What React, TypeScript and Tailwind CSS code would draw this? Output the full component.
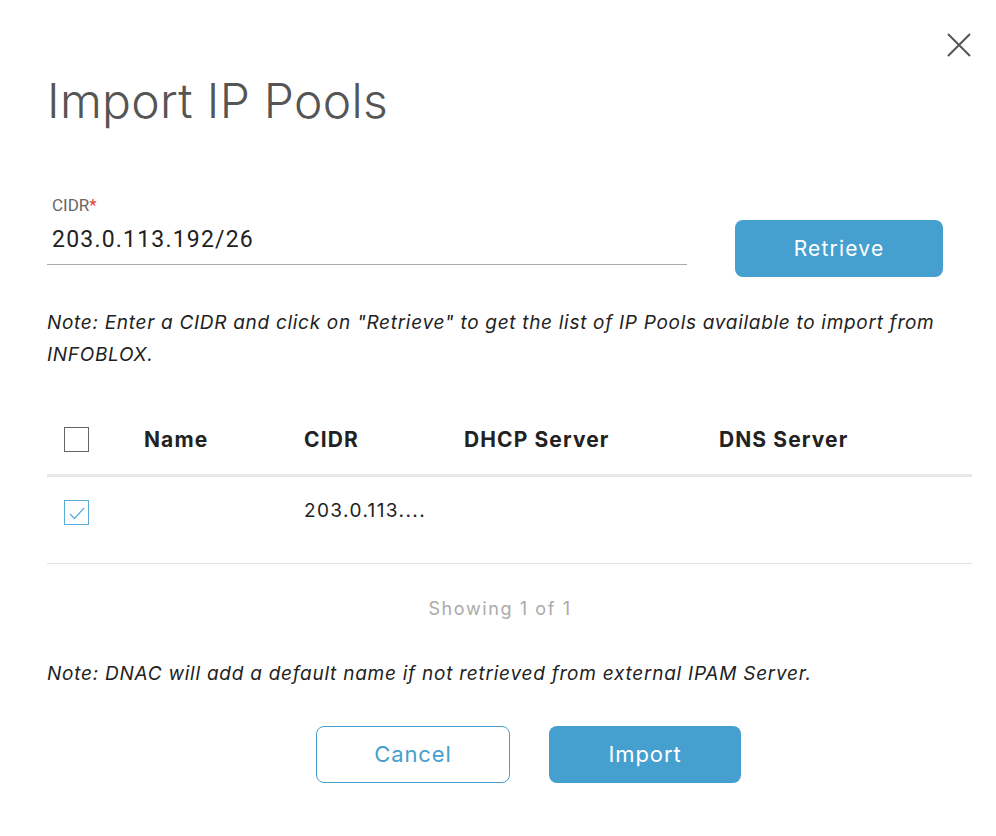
export default function App() {
  return (
    <div
      className="relative w-[996px] h-[836px] bg-white text-[#222]"
      style={{ fontFamily: "Inter, 'Noto Sans', sans-serif" }}
    >
      <button className="absolute left-[947px] top-[33px]">
        <svg width="24" height="24" viewBox="0 0 24 24" fill="none">
          <path d="M1 1 L23 23 M23 1 L1 23" stroke="#555" strokeWidth="2" />
        </svg>
      </button>

      <div className="px-[47px] pt-[72px]">
        <h1 className="text-[48px] leading-[58px] font-light text-[#555] tracking-[0.3px]">
          Import IP Pools
        </h1>

        {/* CIDR input */}
        <div className="mt-[65px] flex items-end">
          <div className="w-[640px]">
            <label
              className="block pl-[5px] text-[17px] leading-[20px] text-[#666]"
              style={{ fontFamily: "Roboto, sans-serif" }}
            >
              CIDR<span className="text-[#e8413a]">*</span>
            </label>
            <div
              className="mt-[10px] pl-[5px] text-[23px] leading-[30px] tracking-[1.2px] text-[#222] pb-[9px] border-b border-[#aaa]"
              style={{ fontFamily: "Roboto, sans-serif" }}
            >
              203.0.113.192/26
            </div>
          </div>
          <button className="ml-[48px] mb-[-12px] w-[208px] h-[57px] rounded-[8px] bg-[#46a0cf] text-white text-[21px] tracking-[1.2px]">
            Retrieve
          </button>
        </div>

        <p className="mt-[42px] w-[902px] text-[19px] leading-[32px] italic text-[#222] tracking-[0.7px]">
          Note: Enter a CIDR and click on "Retrieve" to get the list of IP Pools available to import from INFOBLOX.
        </p>

        {/* Table */}
        <div className="mt-[34px] w-[925px]">
          <div className="flex items-center h-[72px] border-b-[3px] border-[#e8e8e8]">
            <div className="w-[97px] pl-[17px]">
              <div className="w-[25px] h-[25px] border-[1.5px] border-[#666] bg-white" />
            </div>
            <div className="w-[160px] text-[21px] font-bold tracking-[1.1px]">Name</div>
            <div className="w-[160px] text-[21px] font-bold tracking-[1.1px]">CIDR</div>
            <div className="w-[255px] text-[21px] font-bold tracking-[1.1px]">DHCP Server</div>
            <div className="text-[21px] font-bold tracking-[1.1px]">DNS Server</div>
          </div>
          <div className="flex items-start h-[87px] border-b border-[#e3e3e3] pt-[23px]">
            <div className="w-[97px] pl-[17px]">
              <div className="w-[25px] h-[25px] border-[1.5px] border-[#5aaedb] flex items-center justify-center">
                <svg width="18" height="14" viewBox="0 0 18 14" fill="none">
                  <path d="M2 8 L6.5 12.5 L16 2" stroke="#5aaedb" strokeWidth="1.3" />
                </svg>
              </div>
            </div>
            <div className="w-[160px]" />
            <div className="w-[160px] text-[19px] leading-[22px] tracking-[1.4px]">203.0.113....</div>
          </div>
        </div>

        <div className="mt-[34px] w-[906px] text-center text-[18px] leading-[22px] text-[#aaa] tracking-[1.6px]">
          Showing 1 of 1
        </div>

        <p className="mt-[43px] text-[19px] leading-[22px] italic text-[#222] tracking-[0.75px]">
          Note: DNAC will add a default name if not retrieved from external IPAM Server.
        </p>

        <div className="mt-[41px] ml-[269px] flex gap-[39px]">
          <button className="w-[194px] h-[57px] rounded-[8px] border border-[#46a0cf] text-[#46a0cf] text-[22px] tracking-[0.9px]">
            Cancel
          </button>
          <button className="w-[192px] h-[57px] rounded-[8px] bg-[#46a0cf] text-white text-[22px] tracking-[0.9px]">
            Import
          </button>
        </div>
      </div>
    </div>
  );
}
